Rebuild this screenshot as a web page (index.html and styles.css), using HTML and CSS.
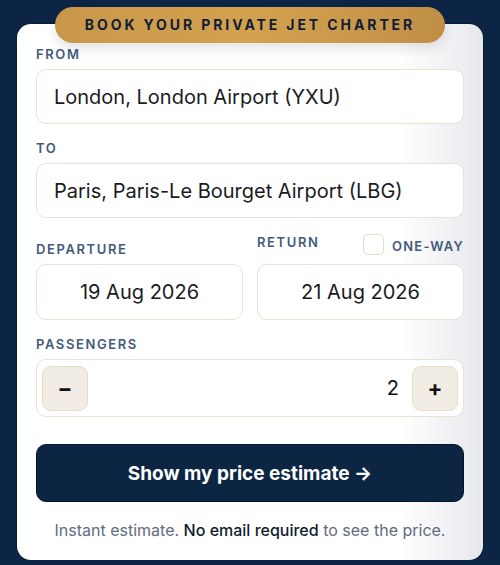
FILE: index.html
```html
<!DOCTYPE html>
<html lang="en">
<head>
    <title>Private Jet Charter</title>
    <link rel="stylesheet" href="styles.css">
</head>
<body>
    <div class="card">
        <div class="badge">BOOK YOUR PRIVATE JET CHARTER</div>

        <div class="field">
            <label class="label">FROM</label>
            <div class="input">London, London Airport (YXU)</div>
        </div>

        <div class="field">
            <label class="label">TO</label>
            <div class="input">Paris, Paris-Le Bourget Airport (LBG)</div>
        </div>

        <div class="field dates">
            <div class="date-col">
                <label class="label">DEPARTURE</label>
                <div class="input date">19 Aug 2026</div>
            </div>
            <div class="date-col">
                <div class="return-head">
                    <label class="label">RETURN</label>
                    <label class="oneway">
                        <span class="check"></span>
                        <span class="label">ONE-WAY</span>
                    </label>
                </div>
                <div class="input date">21 Aug 2026</div>
            </div>
        </div>

        <div class="field">
            <label class="label">PASSENGERS</label>
            <div class="stepper">
                <button class="step-btn">&minus;</button>
                <span class="count">2</span>
                <button class="step-btn">+</button>
            </div>
        </div>

        <button class="submit">Show my price estimate &rarr;</button>

        <p class="note">Instant estimate. <strong>No email required</strong> to see the price.</p>
    </div>
</body>
</html>
```

FILE: styles.css
```css
body {
    margin: 0;
    background-color: #0c2544;
    font-family: Inter, "Noto Sans", sans-serif;
}
.card {
    position: relative;
    margin: 24px 17px 0 17px;
    padding: 22px 19px 20px 19px;
    background: linear-gradient(to right, #ffffff 82%, #e7e8ec 100%);
    border-radius: 14px;
    box-shadow: 0 0 0 1px #0a1d36;
}
.badge {
    position: absolute;
    top: -17px;
    left: 38px;
    width: 390px;
    height: 36px;
    line-height: 36px;
    text-align: center;
    border-radius: 18px;
    background: linear-gradient(90deg, #c8974a, #d3a24f 50%, #c08f47);
    color: #111c38;
    font-size: 14px;
    font-weight: 700;
    letter-spacing: 2.9px;
    box-shadow: 0 6px 12px rgba(40, 40, 60, 0.12);
}
.field {
    margin-bottom: 16px;
}
.label {
    display: block;
    font-size: 13px;
    line-height: 16px;
    font-weight: 600;
    letter-spacing: 1.6px;
    color: #445b7b;
    margin-bottom: 7px;
}
.input {
    box-sizing: border-box;
    height: 55px;
    padding: 0 17px;
    display: flex;
    align-items: center;
    border: 1.5px solid #e9e1d2;
    border-radius: 10px;
    background: #fff;
    font-size: 20px;
    color: #1b1b1f;
}
.dates {
    display: grid;
    grid-template-columns: 1fr 1fr;
    gap: 14px;
    margin-bottom: 16px;
}
.date-col {
    display: flex;
    flex-direction: column;
    justify-content: flex-end;
}
.date {
    justify-content: center;
    height: 56px;
}
.return-head {
    display: flex;
    justify-content: space-between;
    align-items: flex-start;
    margin-bottom: 9px;
}
.return-head .label {
    margin-bottom: 0;
}
.oneway {
    display: flex;
    align-items: center;
    gap: 8px;
}
.oneway .label {
    letter-spacing: 1.2px;
    margin-top: 2px;
}
.check {
    box-sizing: border-box;
    width: 21px;
    height: 21px;
    border: 1.5px solid #e5dccb;
    border-radius: 5px;
    background: #fff;
}
.stepper {
    box-sizing: border-box;
    height: 58px;
    padding: 0 5px;
    display: flex;
    align-items: center;
    border: 1.5px solid #e9e1d2;
    border-radius: 10px;
    background: #fff;
}
.step-btn {
    width: 46px;
    height: 45px;
    border: 1px solid #e5dccb;
    border-radius: 9px;
    background: #f1ece4;
    font-family: inherit;
    font-size: 22px;
    font-weight: 700;
    color: #111;
    cursor: pointer;
}
.count {
    flex: 1;
    text-align: right;
    padding-right: 13px;
    font-size: 20px;
    color: #111;
}
.submit {
    display: block;
    width: 100%;
    height: 58px;
    margin-top: 27px;
    border: 1px solid #061629;
    border-radius: 10px;
    background: #0c2542;
    color: #fff;
    font-family: inherit;
    font-size: 19px;
    font-weight: 700;
    cursor: pointer;
}
.note {
    margin: 18px 0 0 0;
    text-align: center;
    font-size: 16px;
    color: #5e6d82;
}
.note strong {
    font-weight: 500;
    color: #101c30;
}
```
